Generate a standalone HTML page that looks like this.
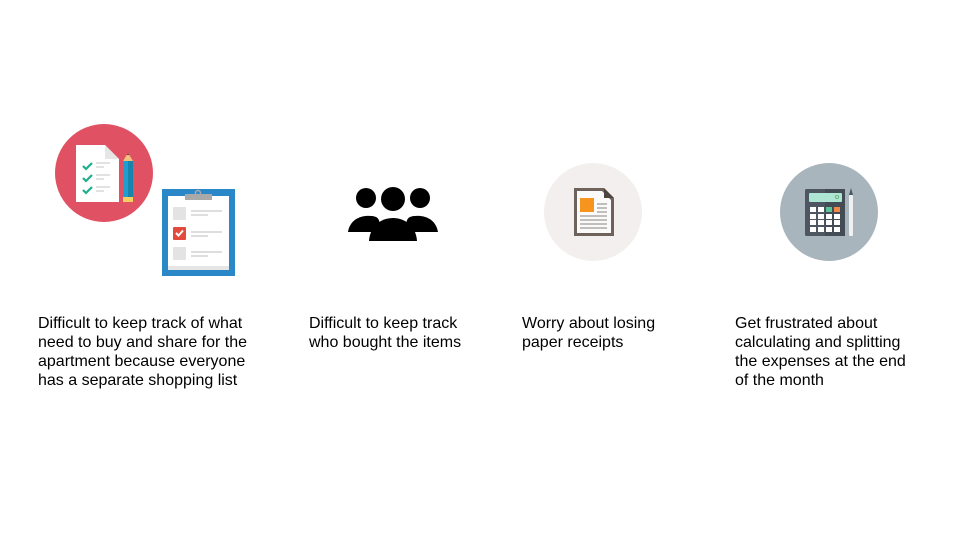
<!DOCTYPE html>
<html><head><style>
body{margin:0;width:960px;height:540px;background:#fff;position:relative;overflow:hidden;font-family:"Liberation Sans",sans-serif;}
.t{position:absolute;font-size:16px;line-height:19px;color:#000;top:314px;}
svg{position:absolute;left:0;top:0}
</style></head><body>
<svg width="960" height="540" viewBox="0 0 960 540">
<circle cx="104" cy="173" r="49" fill="#e05263"/>
<path d="M76 145 H105 L119 159 V202 H76 Z" fill="#fff"/>
<path d="M105 145 V159 H119 Z" fill="#e6e6e6"/>
<g stroke="#1fae8c" stroke-width="2.2" fill="none">
<path d="M83 166 l3 3 l6 -6"/><path d="M83 178 l3 3 l6 -6"/><path d="M83 190 l3 3 l6 -6"/></g>
<g stroke="#d9d9d9" stroke-width="1.5"><path d="M96 163h14M96 167h8M96 175h14M96 179h8M96 187h14M96 191h8"/></g>
<path d="M123 161 L128 153 L133 161 Z" fill="#f1c27d"/>
<path d="M127 155 L128 153 L129 155Z" fill="#333"/>
<rect x="123" y="161" width="10" height="36" fill="#1e9fcf"/>
<rect x="128" y="161" width="5" height="36" fill="#1883ad"/>
<rect x="123" y="197" width="10" height="5" fill="#f6cf61"/>
<rect x="162" y="189" width="73" height="87" fill="#2a87c8"/>
<rect x="168" y="196" width="61" height="74" fill="#fff"/>
<rect x="168" y="266" width="61" height="4" fill="#e6e6e6"/>
<rect x="185" y="194" width="27" height="6" fill="#a9a9a9"/>
<circle cx="198" cy="193" r="2.5" fill="none" stroke="#a9a9a9" stroke-width="1.5"/>
<rect x="173" y="207" width="13" height="13" rx="1" fill="#e3e3e3"/>
<rect x="173" y="227" width="13" height="13" rx="1" fill="#e34a3c"/>
<path d="M176 233 l2.5 2.5 l4.5 -5" stroke="#fff" stroke-width="2" fill="none"/>
<rect x="173" y="247" width="13" height="13" rx="1" fill="#e3e3e3"/>
<g stroke="#d3d3d3" stroke-width="1.5"><path d="M191 211h31M191 215h17M191 232h31M191 236h17M191 252h31M191 256h17"/></g>
<g fill="#000">
<circle cx="366" cy="198" r="10"/><circle cx="393" cy="199" r="12"/><circle cx="420" cy="198" r="10"/>
<path d="M348 232 C350 220 360 215 371 216 C378 216 382 220 378 232 Z"/>
<path d="M438 232 C436 220 426 215 415 216 C408 216 404 220 408 232 Z"/>
<path d="M369 241 C370 226 381 218 393 218 C405 218 416 226 417 241 Z"/>
</g>
<circle cx="593" cy="212" r="49" fill="#f3efee"/>
<path d="M574 188 H604 L614 198 V236 H574 Z" fill="#6e625a"/>
<path d="M577 191 H602 L611 200 V233 H577 Z" fill="#fafafa"/>
<path d="M604 188 V198 H614 Z" fill="#4e4540"/>
<rect x="580" y="198" width="14" height="14" fill="#f7941d"/>
<g stroke="#8a817c" stroke-width="1"><path d="M597 204h10M597 208h10M597 212h10M580 216h27M580 220h27M580 224h27M580 228h27"/></g>
<circle cx="829" cy="212" r="49" fill="#a8b5bd"/>
<rect x="805" y="189" width="40" height="47" rx="1.5" fill="#4d5661"/>
<rect x="825" y="189" width="20" height="47" fill="#434b55"/>
<rect x="809" y="193" width="33" height="9" rx="1" fill="#aee6d4"/>
<circle cx="837" cy="197" r="1.6" fill="none" stroke="#6a7" stroke-width="0.8"/>
<g fill="#fff">
<rect x="810" y="207" width="6" height="5"/><rect x="818" y="207" width="6" height="5"/><rect x="826" y="207" width="6" height="5" fill="#5cc49a"/><rect x="834" y="207" width="6" height="5" fill="#f0884a"/>
<rect x="810" y="214" width="6" height="5"/><rect x="818" y="214" width="6" height="5"/><rect x="826" y="214" width="6" height="5"/><rect x="834" y="214" width="6" height="5"/>
<rect x="810" y="220" width="6" height="5"/><rect x="818" y="220" width="6" height="5"/><rect x="826" y="220" width="6" height="5"/><rect x="834" y="220" width="6" height="5"/>
<rect x="810" y="227" width="6" height="5"/><rect x="818" y="227" width="6" height="5"/><rect x="826" y="227" width="6" height="5"/><rect x="834" y="227" width="6" height="5"/>
</g>
<rect x="849" y="195" width="4" height="41" rx="1" fill="#eef0f1"/>
<path d="M849 195 L851 188 L853 195Z" fill="#4d5661"/>
</svg>
<div class="t" style="left:38px">Difficult to keep track of what<br>need to buy and share for the<br>apartment because everyone<br>has a separate shopping list</div>
<div class="t" style="left:309px">Difficult to keep track<br>who bought the items</div>
<div class="t" style="left:522px">Worry about losing<br>paper receipts</div>
<div class="t" style="left:735px">Get frustrated about<br>calculating and splitting<br>the expenses at the end<br>of the month</div>
</body></html>
